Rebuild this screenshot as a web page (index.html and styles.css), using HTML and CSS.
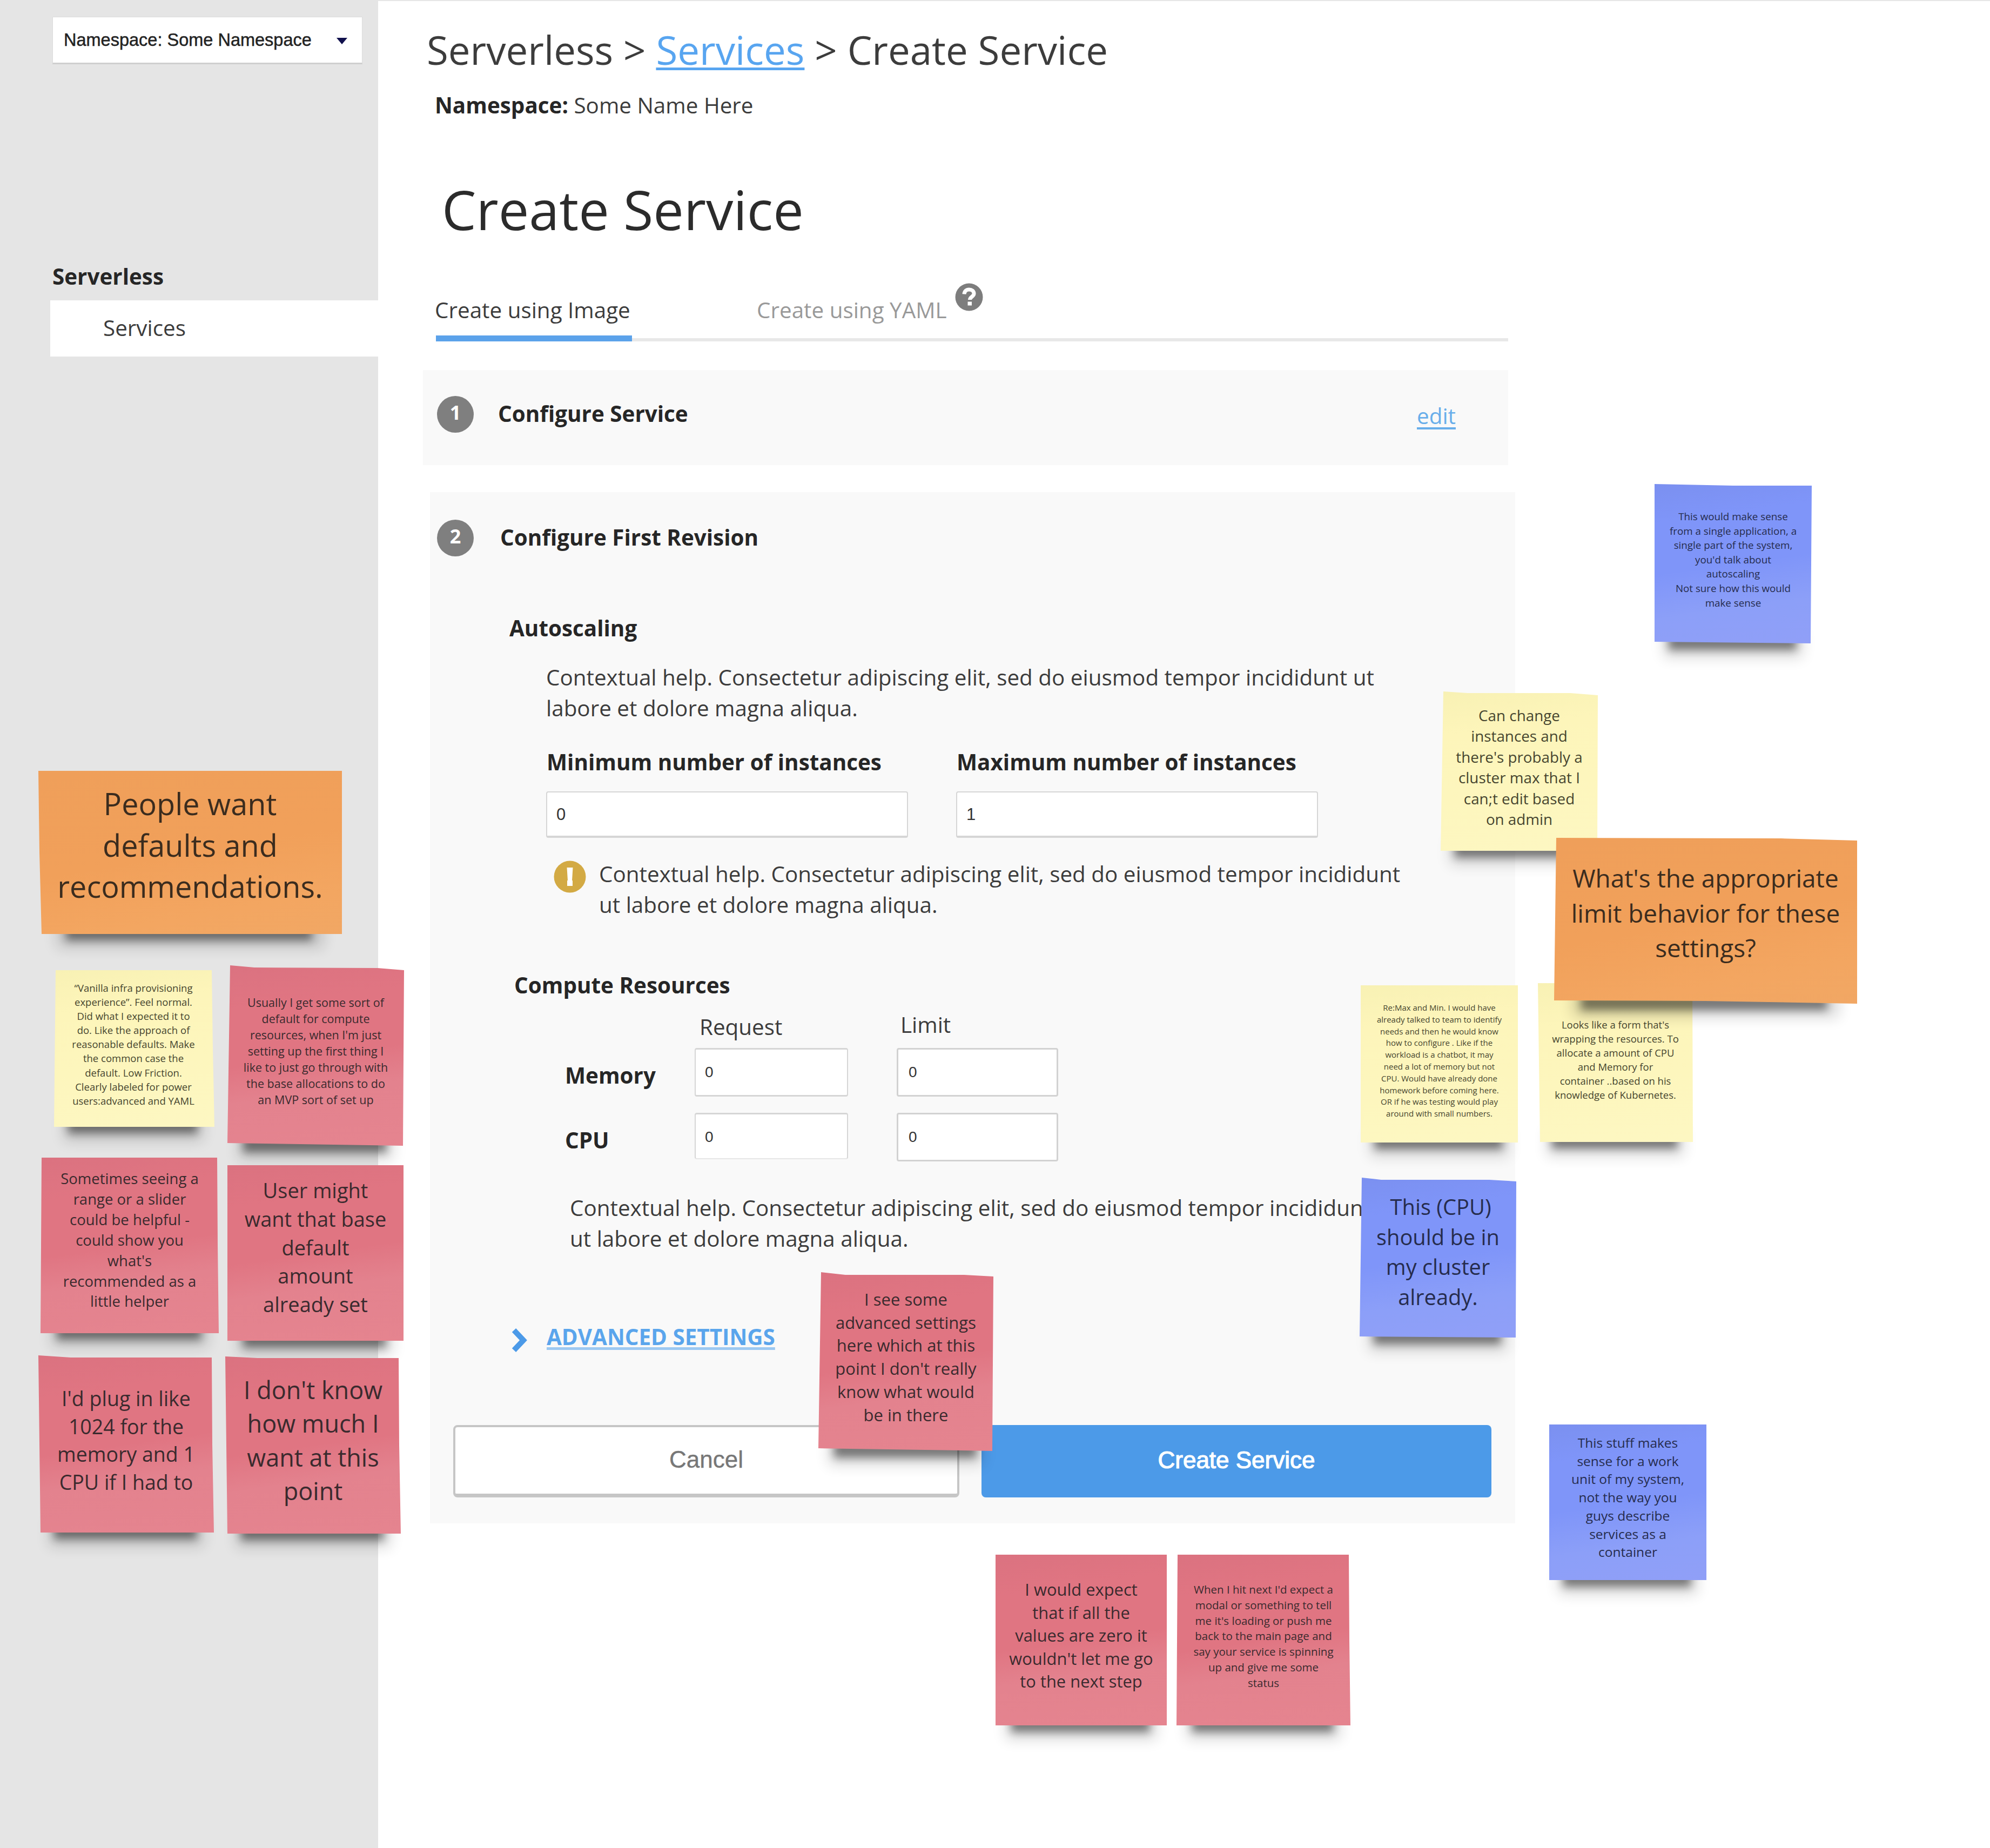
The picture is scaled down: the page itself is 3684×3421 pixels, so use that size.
FILE: index.html
```html
<!DOCTYPE html>
<html lang="en">
<head>
<meta charset="utf-8">
<title>Create Service</title>
<link rel="stylesheet" href="styles.css">
</head>
<body>
<div class="app">
  <aside class="sidebar">
    <div class="ns-select"><span>Namespace: Some Namespace</span><i class="caret"></i></div>
    <h2 class="side-title">Serverless</h2>
    <a class="side-item">Services</a>
  </aside>
  <main class="main">
    <nav class="crumbs">Serverless &gt; <a class="link">Services</a> &gt; Create Service</nav>
    <p class="namespace"><b>Namespace:</b> Some Name Here</p>
    <h1 class="title">Create Service</h1>
    <div class="tabs">
      <span class="tab tab-active">Create using Image</span>
      <span class="tab tab-yaml">Create using YAML</span>
      <svg class="help-icon" viewBox="0 0 52 52"><circle cx="26" cy="26" r="25.5" fill="#7d7d7d"/><path d="M17 20.500c.5-5.500 4-8.500 9-8.500s9 3 9 7.500c0 5.500-7.500 6-7.500 11.500" fill="none" stroke="#fff" stroke-width="7"/><rect x="23.500" y="34.500" width="7.500" height="7" fill="#fff"/></svg>
    </div>
    <section class="card card-done">
      <span class="step">1</span><h3 class="card-title">Configure Service</h3><a class="link edit">edit</a>
    </section>
    <section class="card card-open">
      <header class="card-head"><span class="step">2</span><h3 class="card-title card-title-2">Configure First Revision</h3></header>
      <h4 class="group-title">Autoscaling</h4>
      <p class="help help-scaling">Contextual help. Consectetur adipiscing elit, sed do eiusmod tempor incididunt ut<br>labore et dolore magna aliqua.</p>
      <div class="instances">
        <div class="field"><label class="label">Minimum number of instances</label><div class="input input-wide">0</div></div>
        <div class="field"><label class="label">Maximum number of instances</label><div class="input input-wide">1</div></div>
      </div>
      <div class="warning">
        <svg class="warn-icon" viewBox="0 0 60 60"><circle cx="30" cy="30" r="29.500" fill="#d3aa44"/><path d="M24.500 13h11l-1.500 24h1v10h-10V37h1z" fill="#fff"/></svg>
        <p class="help">Contextual help. Consectetur adipiscing elit, sed do eiusmod tempor incididunt<br>ut labore et dolore magna aliqua.</p>
      </div>
      <h4 class="group-title group-compute">Compute Resources</h4>
      <div class="resources">
        <span></span><span class="col-head col-request">Request</span><span class="col-head col-limit">Limit</span>
        <b class="row-head">Memory</b><div class="input input-small">0</div><div class="input input-small input-limit">0</div>
        <b class="row-head">CPU</b><div class="input input-small input-cpu">0</div><div class="input input-small input-limit">0</div>
      </div>
      <p class="help help-compute">Contextual help. Consectetur adipiscing elit, sed do eiusmod tempor incididunt<br>ut labore et dolore magna aliqua.</p>
      <div class="advanced"><svg class="chevron" viewBox="0 0 30 46"><path d="M4.500 4.500L22 23 4.500 41.500" fill="none" stroke="#4c9ae8" stroke-width="10"/></svg><a class="adv-link">ADVANCED SETTINGS</a></div>
      <div class="actions"><button class="btn btn-cancel">Cancel</button><button class="btn btn-primary">Create Service</button></div>
    </section>
  </main>
</div>

<div class="board">
  <div class="note orange n-people"><div class="paper"></div><p>People want<br>defaults and<br>recommendations.</p></div>
  <div class="note yellow n-vanilla"><div class="paper"></div><p>“Vanilla infra provisioning<br>experience”. Feel normal.<br>Did what I expected it to<br>do. Like the approach of<br>reasonable defaults. Make<br>the common case the<br>default. Low Friction.<br>Clearly labeled for power<br>users:advanced and YAML</p></div>
  <div class="note red n-usually"><div class="paper"></div><p>Usually I get some sort of<br>default for compute<br>resources, when I'm just<br>setting up the first thing I<br>like to just go through with<br>the base allocations to do<br>an MVP sort of set up</p></div>
  <div class="note red n-slider"><div class="paper"></div><p>Sometimes seeing a<br>range or a slider<br>could be helpful -<br>could show you<br>what's<br>recommended as a<br>little helper</p></div>
  <div class="note red n-base"><div class="paper"></div><p>User might<br>want that base<br>default<br>amount<br>already set</p></div>
  <div class="note red n-plug"><div class="paper"></div><p>I'd plug in like<br>1024 for the<br>memory and 1<br>CPU if I had to</p></div>
  <div class="note red n-know"><div class="paper"></div><p>I don't know<br>how much I<br>want at this<br>point</p></div>
  <div class="note blue n-sense"><div class="paper"></div><p>This would make sense<br>from a single application, a<br>single part of the system,<br>you'd talk about<br>autoscaling<br>Not sure how this would<br>make sense</p></div>
  <div class="note yellow n-change"><div class="paper"></div><p>Can change<br>instances and<br>there's probably a<br>cluster max that I<br>can;t edit based<br>on admin</p></div>
  <div class="note yellow n-maxmin"><div class="paper"></div><p>Re:Max and Min. I would have<br>already talked to team to identify<br>needs and then he would know<br>how to configure . Like if the<br>workload is a chatbot, it may<br>need a lot of memory but not<br>CPU. Would have already done<br>homework before coming here.<br>OR if he was testing would play<br>around with small numbers.</p></div>
  <div class="note yellow n-looks"><div class="paper"></div><p>Looks like a form that's<br>wrapping the resources. To<br>allocate a amount of CPU<br>and Memory for<br>container ..based on his<br>knowledge of Kubernetes.</p></div>
  <div class="note orange n-limit"><div class="paper"></div><p>What's the appropriate<br>limit behavior for these<br>settings?</p></div>
  <div class="note blue n-cluster"><div class="paper"></div><p>&nbsp;This (CPU)<br>should be in<br>my cluster<br>already.</p></div>
  <div class="note red n-advanced"><div class="paper"></div><p>I see some<br>advanced settings<br>here which at this<br>point I don't really<br>know what would<br>be in there</p></div>
  <div class="note blue n-stuff"><div class="paper"></div><p>This stuff makes<br>sense for a work<br>unit of my system,<br>not the way you<br>guys describe<br>services as a<br>container</p></div>
  <div class="note red n-expect"><div class="paper"></div><p>I would expect<br>that if all the<br>values are zero it<br>wouldn't let me go<br>to the next step</p></div>
  <div class="note red n-next"><div class="paper"></div><p>When I hit next I'd expect a<br>modal or something to tell<br>me it's loading or push me<br>back to the main page and<br>say your service is spinning<br>up and give me some<br>status</p></div>
</div>
</body>
</html>
```
FILE: styles.css
```css
* { box-sizing: border-box; }
body {
  margin: 0;
  position: relative;
  width: 3684px;
  height: 3421px;
  overflow: hidden;
  background: #fff;
  color: #3c3c3c;
  font: 40.4px/56px "Open Sans", sans-serif;
}
h1, h2, h3, h4, p { margin: 0; font-size: inherit; }
b, h2, h3, h4, .label { color: #262626; font-weight: 700; }

.app { display: flex; height: 3421px; white-space: nowrap; }

/* sidebar */
.sidebar { width: 700px; flex: none; background: #e5e5e5; padding: 31px 0 0 97px; }
.ns-select {
  width: 574px; height: 88px; padding: 0 27px 0 20px;
  display: flex; align-items: center; justify-content: space-between;
  background: #fff; border: 1px solid #dcdcdc; border-bottom: 3px solid #cfcfcf;
  font: 32.5px/40px "Liberation Sans", Arial, sans-serif; color: #222; -webkit-text-stroke: .5px #222;
}
.caret { border: 10px solid transparent; border-top: 12px solid #10104c; border-bottom: 0; margin-top: 3px; }
.side-title { margin-top: 365px; }
.side-item { display: block; margin: 16px 0 0 -4px; height: 104px; padding: 23px 0 0 98px; background: #fff; }

/* page header */
.main { flex: 1; padding-top: 40px; border-top: 2px solid #e6e6e6; }
.link { color: #58a5f0; text-decoration: underline; }
.crumbs { margin-left: 90px; font-size: 72.6px; line-height: 100px; }
.crumbs .link { text-decoration-thickness: 5px; text-underline-offset: 5px; }
.namespace { margin: 25px 0 0 105px; }
.title { margin: 95px 0 0 118px; font-size: 100.8px; line-height: 138px; font-weight: 400; color: #2b2b2b; }

.tabs { display: flex; margin: 88px 0 0 107px; width: 1985px; height: 88px; border-bottom: 6px solid #e8e8e8; }
.tab { padding-top: 2px; }
.tab-active { width: 363px; height: 88px; border-bottom: 11px solid #5ba2ea; text-indent: -2px; }
.tab-yaml { margin-left: 231px; color: #999; }
.help-icon { width: 52px; height: 52px; margin: -20px 0 0 15px; }

/* step cards */
.card { background: #f9f9f9; }
.card-done { display: flex; width: 2009px; height: 176px; margin: 53px 0 0 83px; padding: 48px 97px 0 26px; }
.card-done .edit { margin: 9px 0 0 auto; color: #68aeea; text-decoration-thickness: 4px; text-underline-offset: 6px; }
.card-open { width: 2009px; height: 1909px; margin: 50px 0 0 96px; padding-top: 51px; }
.card-head { display: flex; padding-left: 13px; }
.step {
  width: 68px; height: 68px; flex: none; border-radius: 50%; background: #7f7f7f;
  color: #fff; font-size: 36px; font-weight: 700; line-height: 61px; text-align: center;
}
.card-title { margin: 5px 0 0 45px; }
.card-title-2 { margin-left: 49px; }
.group-title { margin: 105px 0 0 147px; }
.help { line-height: 57px; }
.help-scaling { margin: 34px 0 0 215px; }
.instances { display: flex; gap: 89px; margin: 44px 0 0 215px; }
.label { display: block; text-indent: 1px; }
.input {
  background: #fff; border: 2px solid #d6d6d6; border-radius: 4px;
  font: 31px/40px "Liberation Sans", Arial, sans-serif; color: #333; padding: 21px 0 0 17px;
}
.input-wide { width: 670px; height: 86px; margin-top: 26px; border-bottom-width: 4px; }
.warning { display: flex; margin: 38px 0 0 229px; }
.warn-icon { width: 60px; height: 60px; margin: 4px 24px 0 0; }
.group-compute { margin: 93px 0 0 156px; }
.resources {
  display: grid; grid-template-columns: 240px 374px 298px; grid-template-rows: 73px 120px 90px;
  margin: 15px 0 0 250px;
}
.col-request { padding: 6px 0 0 9px; }
.col-limit { padding: 2px 0 0 7px; }
.row-head { padding-top: 23px; }
.input-small { width: 284px; height: 90px; font-size: 28px; padding: 22px 0 0 17px; border-width: 3px 2px; }
.input-limit { width: 299px; padding-left: 19px; border-width: 3px; border-color: #d2d2d2; }
.input-cpu { height: 86px; border-bottom-width: 2px; border-bottom-color: #e6e6e6; }
.help-compute { margin: 57px 0 0 259px; }
.advanced { display: flex; height: 58px; margin: 126px 0 0 151px; }
.chevron { width: 30px; height: 46px; margin-top: 11px; }
.adv-link { margin-left: 35px; font-weight: 700; color: #5aa5ec; text-decoration: underline; text-decoration-thickness: 5px; text-underline-offset: 4px; text-decoration-color: #9cc8f1; }
.actions { display: flex; gap: 41px; margin: 133px 0 0 43px; }
.btn { height: 134px; border-radius: 8px; padding: 0 0 5px; font: 44px/52px "Liberation Sans", Arial, sans-serif; }
.btn-cancel { width: 937px; background: #fff; color: #777; border: 4px solid #c6c6c6; border-bottom-width: 7px; padding-bottom: 3px; -webkit-text-stroke: .4px #777; }
.btn-primary { width: 944px; background: #4c9ae8; color: #fff; border: 0; -webkit-text-stroke: 1.2px #fff; }

/* sticky notes pinned over the page */
.note { position: absolute; isolation: isolate; text-align: center; color: #3a2a2e; white-space: nowrap; }
.note::before, .note::after { content: ""; position: absolute; background: #000; }
.note::before { left: 9%; right: 10%; bottom: -12px; height: 30px; opacity: .45; filter: blur(8px); }
.note::after { left: 6%; right: 6%; bottom: -26px; height: 50px; opacity: .15; filter: blur(13px); z-index: -1; }
.paper { position: absolute; inset: 0; }
.note p { position: relative; line-height: var(--lh); }
.red .paper { background: linear-gradient(172deg, #db7280 0%, #e07582 22%, #e07582 50%, #e3828e 68%, #e5848f 100%); }
.orange .paper { background: linear-gradient(170deg, #ef9f5a 0%, #f1a05a 50%, #f3a661 80%, #f1a764 100%); }
.yellow .paper { background: linear-gradient(172deg, #f8f1b4 0%, #fdf5ba 25%, #fdf6bd 60%, #fdf7c2 100%); }
.blue .paper { background: linear-gradient(172deg, #7b90f0 0%, #7f95f9 22%, #7f95f9 50%, #8c9ff8 75%, #909ff7 100%); }
.orange { color: #3b2c1e; }
.yellow { color: #46452f; }
.blue { color: #262c4d; }

.n-people { left: 71px; top: 1427px; width: 562px; height: 302px; font-size: 55.8px; --lh: 76.5px; padding-top: 22px; }
.n-people .paper { clip-path: polygon(0 0, 100% 0, 100% 100%, 6px 100%, 2px 50%); }
.n-vanilla { left: 100px; top: 1796px; width: 294px; height: 290px; font-size: 18.5px; --lh: 26.1px; padding-top: 20px; }
.n-vanilla .paper { right: -3px; clip-path: polygon(3px 0, 292px 0, 294px 50%, 100% 100%, 0 100%); }
.n-usually { left: 421px; top: 1787px; width: 327px; height: 334px; font-size: 21.5px; --lh: 30px; padding-top: 54px; }
.n-usually .paper { clip-path: polygon(5px 0, 50px 4px, 278px 5px, 100% 9px, 325px 100%, 0 329px); }
.n-slider { left: 75px; top: 2143px; width: 330px; height: 325px; font-size: 27.5px; --lh: 37.9px; padding-top: 20px; }
.n-slider .paper { clip-path: polygon(2px 0, 327px 0, 328px 50%, 100% 100%, 0 100%); }
.n-base { left: 421px; top: 2157px; width: 326px; height: 325px; font-size: 38px; --lh: 52.8px; padding-top: 20px; }
.n-plug { left: 71px; top: 2509px; width: 325px; height: 328px; font-size: 37.5px; --lh: 51.5px; padding-top: 54px; }
.n-plug .paper { clip-path: polygon(0 0, 60px 4px, 321px 4px, 322px 50%, 100% 100%, 4px 100%); }
.n-know { left: 417px; top: 2511px; width: 325px; height: 328px; font-size: 45px; --lh: 62.3px; padding-top: 31px; }
.n-know .paper { clip-path: polygon(0 0, 60px 3px, 321px 3px, 322px 50%, 100% 100%, 4px 100%); }
.n-sense { left: 3063px; top: 896px; width: 291px; height: 295px; font-size: 18.8px; --lh: 26.6px; padding-top: 47px; }
.n-sense .paper { clip-path: polygon(0 0, 50% 3px, 100% 3px, 289px 100%, 0 292px); }
.n-change { left: 2667px; top: 1280px; width: 291px; height: 295px; font-size: 27.8px; --lh: 38.4px; padding-top: 25px; }
.n-change .paper { clip-path: polygon(5px 0, 50px 3px, 240px 3px, 100% 7px, 290px 100%, 0 100%); }
.n-maxmin { left: 2519px; top: 1824px; width: 291px; height: 291px; font-size: 15px; --lh: 21.8px; padding-top: 31px; }
.n-looks { left: 2847px; top: 1820px; width: 287px; height: 294px; font-size: 18.5px; --lh: 25.9px; padding-top: 64px; }
.n-looks .paper { clip-path: polygon(0 0, 286px 0, 100% 100%, 4px 100%); }
.n-limit { left: 2877px; top: 1551px; width: 561px; height: 307px; font-size: 45.9px; --lh: 64.5px; padding-top: 42px; }
.n-limit .paper { clip-path: polygon(4px 0, 420px 1px, 100% 5px, 100% 100%, 50% 302px, 0 301px); }
.n-cluster { left: 2517px; top: 2180px; width: 290px; height: 296px; font-size: 39.8px; --lh: 55.5px; padding-top: 26px; }
.n-cluster .paper { clip-path: polygon(4px 0, 40px 4px, 240px 4px, 100% 7px, 289px 100%, 0 294px); }
.n-advanced { left: 1515px; top: 2355px; width: 324px; height: 331px; font-size: 31px; --lh: 42.7px; padding-top: 29px; }
.n-advanced .paper { clip-path: polygon(5px 0, 50px 5px, 270px 5px, 100% 8px, 322px 100%, 0 326px); }
.n-stuff { left: 2868px; top: 2637px; width: 291px; height: 288px; font-size: 24.5px; --lh: 33.7px; padding-top: 17px; }
.n-expect { left: 1843px; top: 2878px; width: 317px; height: 316px; font-size: 30.9px; --lh: 42.5px; padding-top: 43px; }
.n-next { left: 2178px; top: 2878px; width: 322px; height: 316px; font-size: 20.5px; --lh: 28.8px; padding-top: 50px; }
.n-next .paper { clip-path: polygon(2px 0, 319px 0, 320px 50%, 100% 100%, 0 100%); }
```
